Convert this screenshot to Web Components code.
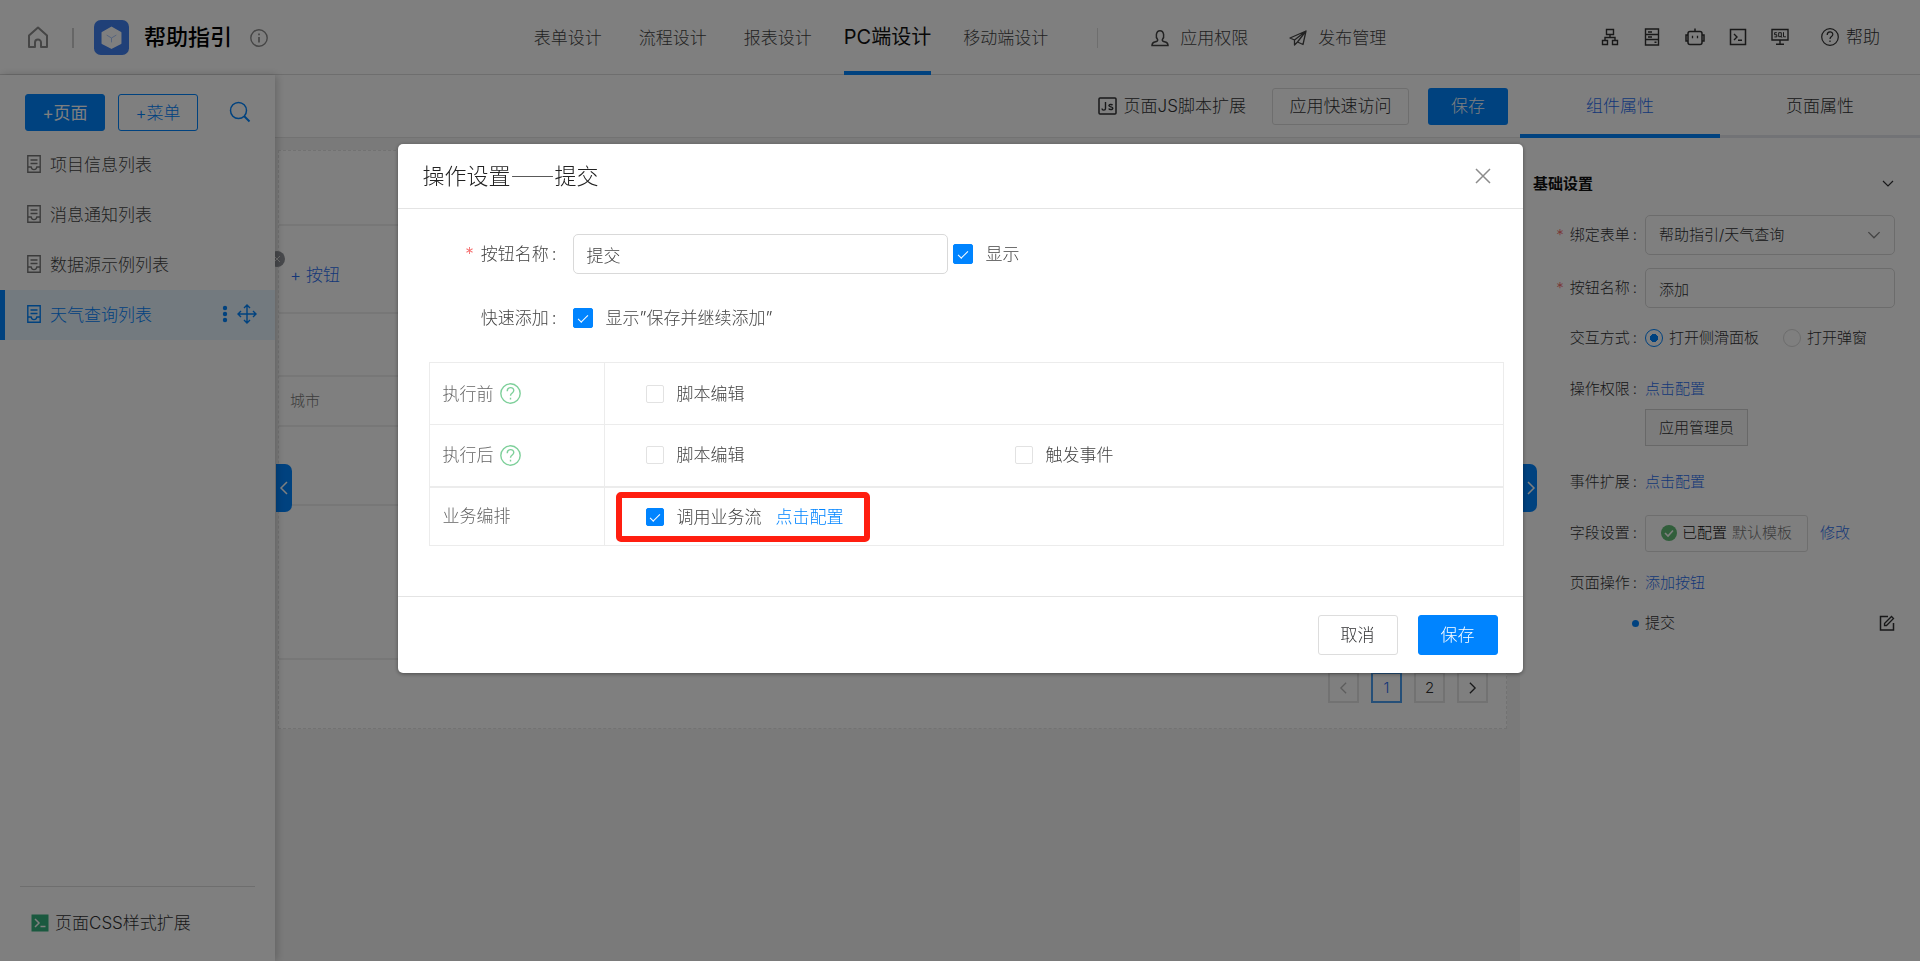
<!DOCTYPE html>
<html lang="zh-CN">
<head>
<meta charset="utf-8">
<title>帮助指引</title>
<style>
  html, body { margin: 0; min-height: 100%; }
  body {
    font-family: Inter, "Noto Sans CJK SC", sans-serif;
    font-weight: 300; font-size: 17px; line-height: 24px; color: #303133;
    --blue: #0084ff; --link: #2b6ff0; --line: #e8e8e8; --bg: #f5f5f5;
  }
</style>
</head>
<body>
<app-shell></app-shell>
<modal-dialog heading="操作设置——提交"><action-form></action-form></modal-dialog>

<script>
const BASE = `
  *, *::before, *::after { box-sizing: border-box; }
  button, input, select { font: inherit; color: inherit; margin: 0; padding: 0; background: none; border: 0; }
  button { cursor: pointer; }
  a { color: var(--link); text-decoration: none; }
`;
function define(name, css, html) {
  customElements.define(name, class extends HTMLElement {
    connectedCallback() {
      if (this.shadowRoot) return;
      const t = document.createElement('template');
      t.innerHTML = `<style>${BASE}${css}</style>${typeof html === 'function' ? html(this) : html}`;
      this.attachShadow({ mode: 'open' }).appendChild(t.content.cloneNode(true));
    }
  });
}

/* Icons: each entry is [viewBox width, viewBox height, markup] */
const ICONS = {
  home: [22, 23, '<path d="M2 9.5 11 1.5l9 8V21h-6v-4.500a3 3 0 0 0-6 0V21H2z" stroke-width="2" stroke-linejoin="round"/>'],
  logo: [36, 36, '<rect width="36" height="36" rx="7" fill="#4080f0" stroke="none"/><path d="M18 7.500 27.500 13v11L18 29 8.500 24V13z" fill="#fff" stroke="#fff" stroke-linejoin="round"/><path d="m13 15.500 5 3 5-3M18 18.500V23" stroke="#a9c6fb" stroke-width="1"/>'],
  info: [18, 18, '<circle cx="9" cy="9" r="8.200" stroke-width="1.400"/><path d="M9 8v5.500M9 4.500v1.800" stroke-width="1.700"/>'],
  user: [18, 18, '<path d="M6.600 10.500C4.500 8.500 4.700 1.700 9 1.700s4.500 6.800 2.400 8.800c-.500 1.500.600 1.800 3 2.500 1.700.5 2.600 1.500 2.600 3.500H1c0-2 .900-3 2.600-3.500 2.400-.7 3.500-1 3-2.500z" stroke-width="1.500"/>'],
  plane: [18, 18, '<path d="M17 2 1 9l4.500 2V16l3-3 5.500 2.500zM5.500 11 17 2 8.500 13" stroke-width="1.300" stroke-linejoin="round"/>'],
  tree: [18, 18, '<path d="M5.500 1.500h7v5h-7zM1.500 12.500h5v4h-5zM11.500 12.500h5v4h-5zM9 6.500v3M4 12.500v-3h10v3" stroke-width="1.400"/>'],
  server: [18, 18, '<path d="M2.500 1h13v16h-13zM2.500 6.500h13M2.500 11.500h13M5 4h4M5 9h4M11.500 14.300h2" stroke-width="1.400"/>'],
  robot: [20, 18, '<rect x="3" y="3.500" width="14" height="13" rx="2"/><path d="M10 .5v3M3 7H1v6h2M17 7h2v6h-2" /><path d="M7.500 7.800v2.400M12.500 7.800v2.400" stroke-width="1.300"/>'],
  term: [18, 18, '<path d="M1.500 1.500h15v15h-15z"/><path d="m5 6 3 3-3 3M9 12.300h4" stroke-width="1.400"/>'],
  sql: [18, 18, '<path d="M1 1.500h16v10.500H1zM9 12v4M5 16.200h8" stroke-width="1.400"/><path d="M5.800 4.700H3.600v2h2.200v2.200H3.400M7.700 4.700h2.600v4H7.700zM9.500 8l1.500 1.700M12.500 4.200v4.600h2.400" stroke-width="1"/>'],
  help: [18, 18, '<circle cx="9" cy="9" r="8.300" stroke-width="1.200"/><path d="M6.200 7c0-4 5.600-4 5.600-.5 0 2.200-2.800 2-2.800 4.500M9 12.600v1.500" stroke-width="1.200"/>'],
  search: [22, 22, '<circle cx="9.500" cy="9.500" r="8"/><path d="m15 15 5.500 5.500" stroke-width="2"/>'],
  doc: [14, 18, '<path d="M.8.8h12.400v16.400H.8zM3.500 5h7M3.500 8.500h7M.8 12h3.400c.6 3.500 5 3.500 5.600 0h3.400" stroke-width="1.400"/>'],
  dots: [6, 18, '<g fill="currentColor" stroke="none"><circle cx="3" cy="3" r="2.200"/><circle cx="3" cy="9" r="2.200"/><circle cx="3" cy="15" r="2.200"/></g>'],
  move: [20, 20, '<path d="M10 1v18M1 10h18M7 4l3-3 3 3M7 16l3 3 3-3M4 7l-3 3 3 3M16 7l3 3-3 3" stroke-width="1.400"/>'],
  js: [19, 18, '<rect x="1" y="1" width="17" height="16" rx="1"/><path d="M7.500 5v6.500c0 2.200-3.500 2.200-3.500 0M14.500 8.300c-.6-1.300-4-1-3.500.6.400 1.300 3.600.6 3.800 2.100.2 2-3.500 2-4 .5" stroke-width="1.400"/>'],
  css: [18, 18, '<rect x=".5" y=".5" width="17" height="17" fill="#35b37e" stroke="none"/><path d="m4 5 4 4-4 4M9.500 12.500h5" stroke="#fff" stroke-width="1.500"/>'],
  left: [10, 16, '<path d="M8 2 2 8l6 6"/>'],
  right: [10, 16, '<path d="m2 2 6 6-6 6"/>'],
  down: [12, 8, '<path d="m1 1 5 5 5-5" stroke-width="1.200"/>'],
  close: [16, 16, '<path d="m1 1 14 14M15 1 1 15"/>'],
  badge: [16, 16, '<circle cx="8" cy="8" r="8" fill="#909399" stroke="none"/><path d="m5 5 6 6M11 5l-6 6" stroke="#ddd" stroke-width="1"/>'],
  ok: [16, 16, '<circle cx="8" cy="8" r="8" fill="#62bd76" stroke="none"/><path d="m4 8 3 3 5-5.500" stroke="#fff" stroke-width="1.600"/>'],
  edit: [16, 16, '<path d="M9 1.500H1.500v13.500h13V8" /><path d="m5.500 8.500 7-7 2 2-7 7H5.500z" stroke-width="1.300"/>'],
};
define('ui-icon', ':host{display:inline-flex;flex:none} svg{display:block}', el => {
  const [w, h, body] = ICONS[el.getAttribute('name')];
  const size = Number(el.getAttribute('height')) || h;
  return `<svg aria-hidden="true" width="${Math.round(w * size / h)}" height="${size}" viewBox="0 0 ${w} ${h}" fill="none" stroke="currentColor" stroke-width="1.500">${body}</svg>`;
});

define('app-header', `
  :host { display: grid; grid-template-columns: 1fr auto 1fr; height: 75px; background: #fff; border-bottom: 1px solid #dcdcdc; }
  .brand { display: flex; align-items: center; padding: 0 0 1px 27px; color: #8c8c8c; }
  .bar { width: 2px; height: 20px; background: #ccc; }
  .brand .bar { margin: 0 20px 0 23px; }
  h1 { margin: 0 18px 2px 15px; font-size: 22px; font-weight: 500; color: #000; line-height: 32px; }
  nav, .tools { display: flex; align-items: center; white-space: nowrap; }
  nav { height: 76px; gap: 37px; }
  nav a { color: #444; display: flex; align-items: center; gap: 11px; }
  nav a[aria-current] { font-size: 20px; font-weight: 400; color: #111; align-self: stretch; border-bottom: 5px solid var(--blue); padding-top: 3px; margin: 0 -5px; }
  nav .bar { width: 1px; background: #ddd; margin: 0 16px 0 12px; }
  nav .more { margin-right: 4px; }
  .tools { justify-content: flex-end; gap: 24px; padding: 0 40px 2px 0; color: #333; }
  .tools button { display: flex; align-items: center; gap: 7px; }
  .tools .help { margin-left: 8px; }
`, `
  <div class="brand"><ui-icon name="home"></ui-icon><span class="bar"></span><ui-icon name="logo" height="35"></ui-icon><h1>帮助指引</h1><ui-icon name="info"></ui-icon></div>
  <nav>
    <a href="#form">表单设计</a><a href="#flow">流程设计</a><a href="#report">报表设计</a>
    <a href="#pc" aria-current="page">PC端设计</a><a href="#mobile">移动端设计</a>
    <span class="bar"></span>
    <a class="more" href="#auth"><ui-icon name="user"></ui-icon>应用权限</a><a href="#publish"><ui-icon name="plane"></ui-icon>发布管理</a>
  </nav>
  <div class="tools">
    <button aria-label="组织"><ui-icon name="tree"></ui-icon></button><button aria-label="数据"><ui-icon name="server"></ui-icon></button>
    <button aria-label="机器人"><ui-icon name="robot"></ui-icon></button><button aria-label="终端"><ui-icon name="term"></ui-icon></button>
    <button aria-label="数据库"><ui-icon name="sql"></ui-icon></button><button class="help"><ui-icon name="help"></ui-icon>帮助</button>
  </div>`);

define('side-item', `
  :host { display: block; }
  a { display: flex; align-items: center; height: 50px; padding: 0 18px 0 22px; border-left: 5px solid transparent; color: #444; gap: 9px; }
  ui-icon { color: #777; margin-bottom: 2px; }
  span { flex: 1; }
  :host([active]) a { background: #e6f4ff; border-color: var(--blue); }
  :host([active]) a, :host([active]) ui-icon { color: var(--blue); }
`, el => `<a href="#page"><ui-icon name="doc"></ui-icon><span><slot></slot></span>${el.hasAttribute('active') ? '<ui-icon name="dots"></ui-icon><ui-icon name="move"></ui-icon>' : ''}</a>`);

define('side-bar', `
  :host { display: flex; flex-direction: column; background: #fff; box-shadow: 2px 0 8px rgba(0,0,0,.2); z-index: 1; }
  .top { display: flex; align-items: center; gap: 13px; padding: 19px 25px 9px; color: var(--blue); }
  .top button { width: 80px; height: 37px; border: 1px solid var(--blue); border-radius: 3px; }
  .top .main { background: var(--blue); color: #fff; font-weight: 400; }
  .top .find { display: grid; width: auto; height: auto; border: 0; margin: 0 -1px 2px auto; }
  footer { margin: auto 20px 0; border-top: 1px solid #dcdcdc; height: 75px; display: flex; align-items: center; gap: 6px; padding: 0 0 2px 11px; }
`, `
  <div class="top"><button class="main">+页面</button><button>+菜单</button><button class="find" aria-label="搜索"><ui-icon name="search"></ui-icon></button></div>
  <side-item>项目信息列表</side-item><side-item>消息通知列表</side-item><side-item>数据源示例列表</side-item><side-item active>天气查询列表</side-item>
  <footer><ui-icon name="css"></ui-icon>页面CSS样式扩展</footer>`);

define('design-canvas', `
  :host { display: flex; flex-direction: column; background: var(--bg); position: relative; }
  .bar { display: flex; align-items: center; justify-content: flex-end; gap: 19px; height: 63px; padding-right: 12px; background: #fff; border-bottom: 1px solid #e4e4e4; }
  .bar button { height: 37px; border-radius: 3px; }
  .js { display: flex; align-items: center; gap: 7px; margin-right: 7px; }
  .quick { width: 137px; border: 1px solid #ddd; }
  .save { width: 80px; background: var(--blue); color: #fff; }
  .board { margin: 12px 13px 0 3px; background: #fff; border: 1px dashed #e4e4e4; display: grid; grid-template-rows: 75px 88px 63px 50px 79px 154px 68px; }
  .board > div { border-bottom: 2px solid #efefef; display: flex; align-items: center; padding-left: 11px; }
  .board > .pager { border: 0; gap: 12px; padding-right: 18px; justify-content: flex-end; align-items: flex-start; }
  .board a { padding-top: 12px; }
  .head { font-size: 15px; color: #777; }
  .pager button { width: 31px; height: 31px; margin-top: 12px; border: 2px solid #e4e4e4; font-size: 15px; display: grid; place-items: center; }
  .pager [aria-current] { border-color: #4a9ff0; color: var(--link); }
  .pager [disabled] { color: #bbb; }
  .tab { position: absolute; top: 389px; left: 1px; width: 16px; height: 48px; border-radius: 0 7px 7px 0; background: var(--blue); color: #fff; display: grid; place-items: center; }
  .badge { position: absolute; top: 176px; left: -6px; }
`, `
  <div class="bar"><button class="js"><ui-icon name="js"></ui-icon>页面JS脚本扩展</button><button class="quick">应用快速访问</button><button class="save">保存</button></div>
  <div class="board">
    <div></div><div><a href="#add">+ 按钮</a></div><div></div><div class="head">城市</div><div></div><div></div>
    <div class="pager"><button disabled aria-label="上一页"><ui-icon name="left" height="14"></ui-icon></button><button aria-current="page">1</button><button>2</button><button aria-label="下一页"><ui-icon name="right" height="14"></ui-icon></button></div>
  </div>
  <button class="tab" aria-label="收起"><ui-icon name="left"></ui-icon></button>
  <ui-icon class="badge" name="badge"></ui-icon>`);

define('prop-panel', `
  :host { display: block; background: #fff; position: relative; font-size: 15px; }
  .tabs { display: grid; grid-template-columns: 1fr 1fr; height: 63px; font-size: 17px; }
  .tabs a { display: grid; place-items: center; padding-top: 2px; border-bottom: 3px solid #e4e7ed; color: inherit; }
  .tabs [aria-current] { border-bottom: 4px solid var(--blue); color: var(--link); }
  .title { display: flex; justify-content: space-between; align-items: center; padding: 34px 26px 0 13px; }
  h2 { margin: 0; font-size: 15px; font-weight: 700; color: #111; }
  .grid { display: grid; grid-template-columns: 117px 1fr; column-gap: 8px; padding: 19px 25px 0 0; }
  .grid > * { min-height: 40px; display: flex; align-items: center; }
  .grid > .label { justify-content: flex-end; }
  .label::after { content: ":"; margin-left: 3px; }
  .req::before { content: "*"; color: #f56c6c; margin-right: 6px; }
  .box { border: 1px solid #d9d9d9; border-radius: 5px; height: 40px; padding: 0 13px; width: 100%; }
  .select { position: relative; }
  .select select { appearance: none; }
  .select ui-icon { position: absolute; right: 14px; color: #888; }
  .s13 { margin-bottom: 13px; } .s11 { margin-bottom: 11px; } .s10 { margin-bottom: 10px; }
  .grid > .top { align-items: flex-start; }
  .radio { display: flex; align-items: center; gap: 6px; margin-right: 24px; white-space: nowrap; }
  .radio input { appearance: none; width: 18px; height: 18px; border-radius: 50%; border: 1px solid #d9d9d9; }
  .radio input:checked { border: 1px solid var(--blue); background: radial-gradient(var(--blue) 4px, transparent 4px); }
  .tag { height: 37px; width: 103px; border: 1px solid #d0d0d0; background: #f8f8f8; }
  .conf { height: 37px; width: 163px; border: 1px solid #ddd; border-radius: 3px; display: flex; align-items: center; justify-content: center; gap: 5px; margin-right: 12px; color: #777; white-space: nowrap; }
  .conf b { font-weight: 300; color: #111; }
  .sub { justify-content: space-between; }
  .sub button { display: grid; }
  .dot { justify-content: flex-end; }
  .dot::after { content: ""; width: 7px; height: 7px; margin-right: -2px; border-radius: 50%; background: var(--blue); }
  .tab { position: absolute; top: 389px; left: 1px; width: 16px; height: 48px; border-radius: 0 7px 7px 0; background: var(--blue); color: #fff; display: grid; place-items: center; padding-left: 3px; }
`, `
  <div class="tabs"><a href="#c" aria-current="true">组件属性</a><a href="#p">页面属性</a></div>
  <div class="title"><h2>基础设置</h2><ui-icon name="down"></ui-icon></div>
  <div class="grid">
    <label class="label req s13" for="bind">绑定表单</label><div class="select s13"><select class="box" id="bind"><option>帮助指引/天气查询</option></select><ui-icon name="down" height="9"></ui-icon></div>
    <label class="label req s10" for="name">按钮名称</label><div class="s10"><input class="box" id="name" value="添加"></div>
    <span class="label s11">交互方式</span><div class="s11"><label class="radio"><input type="radio" name="m" checked>打开侧滑面板</label><label class="radio"><input type="radio" name="m">打开弹窗</label></div>
    <span class="label">操作权限</span><div><a href="#1">点击配置</a></div>
    <span></span><div class="top s13"><button class="tag">应用管理员</button></div>
    <span class="label s11">事件扩展</span><div class="s11"><a href="#2">点击配置</a></div>
    <span class="label s10">字段设置</span><div class="s10"><button class="conf"><ui-icon name="ok"></ui-icon><b>已配置</b>默认模板</button><a href="#3">修改</a></div>
    <span class="label">页面操作</span><div><a href="#4">添加按钮</a></div>
    <span class="dot"></span><div class="sub">提交<button aria-label="编辑"><ui-icon name="edit"></ui-icon></button></div>
  </div>
  <button class="tab" aria-label="收起"><ui-icon name="right"></ui-icon></button>`);

define('app-shell', `
  :host { display: flex; flex-direction: column; min-height: 100vh; }
  main { flex: 1; display: grid; grid-template-columns: 275px 1fr 400px; }
`, `<app-header></app-header><main><side-bar></side-bar><design-canvas></design-canvas><prop-panel></prop-panel></main>`);

define('check-box', `
  :host { display: inline-flex; }
  label { display: flex; align-items: center; gap: 13px; }
  input { appearance: none; width: 18px; height: 18px; border: 1px solid #e2e2e2; border-radius: 2px; display: grid; place-items: center; }
  :host([large]) input { width: 20px; height: 20px; }
  input:checked { background: var(--blue); border-color: var(--blue); }
  input:checked::after { content: ""; width: 10px; height: 5px; border: solid #fff; border-width: 0 0 1px 1px; transform: translateY(-1px) rotate(-45deg); }
`, el => `<label><input type="checkbox" ${el.hasAttribute('checked') ? 'checked' : ''}><slot></slot></label>`);

define('action-form', `
  :host { display: block; padding: 25px 19px 50px 31px; color: #444; }
  .row { display: grid; grid-template-columns: 128px 375px auto; column-gap: 16px; align-items: center; min-height: 40px; }
  .row + .row { margin-top: 24px; }
  .label { justify-self: end; }
  .label::after { content: ":"; margin-left: 3px; }
  .req::before { content: "*"; color: #f56c6c; margin-right: 7px; }
  .row input { height: 40px; width: 100%; border: 1px solid #d9d9d9; border-radius: 5px; padding: 0 13px; }
  .row input + check-box { margin-left: -11px; }
  table { width: 100%; margin-top: 24px; border-collapse: collapse; }
  th, td { border: 1px solid #ececec; height: 62px; padding: 0; font-weight: 300; text-align: left; }
  th { width: 175px; padding-left: 13px; color: #666; }
  tr:last-child > * { height: 59px; border-top: 2px solid #ececec; }
  .name { display: flex; align-items: center; gap: 6px; }
  .name ui-icon { color: #7fd09b; }
  .cells { display: grid; grid-template-columns: 369px 1fr; padding-left: 41px; }
  .mark { display: flex; align-items: center; gap: 14px; width: 254px; height: 50px; margin: 2px 0 0 11px; padding: 0 0 0 24px; border: 6px solid #ff1e10; border-radius: 5px; }
  .mark a { color: var(--blue); }
`, `
  <div class="row"><label class="label req" for="n">按钮名称</label><input id="n" value="提交"><check-box large checked>显示</check-box></div>
  <div class="row"><span class="label">快速添加</span><check-box large checked>显示”保存并继续添加”</check-box></div>
  <table>
    <tr><th><span class="name">执行前<ui-icon name="help" height="21"></ui-icon></span></th><td><div class="cells"><check-box>脚本编辑</check-box></div></td></tr>
    <tr><th><span class="name">执行后<ui-icon name="help" height="21"></ui-icon></span></th><td><div class="cells"><check-box>脚本编辑</check-box><check-box>触发事件</check-box></div></td></tr>
    <tr><th>业务编排</th><td><div class="mark"><check-box checked>调用业务流</check-box><a href="#flow">点击配置</a></div></td></tr>
  </table>`);

define('modal-dialog', `
  :host { position: fixed; inset: 0; z-index: 10; background: rgba(0,0,0,.5); display: flex; justify-content: center; align-items: flex-start; padding-top: 15vh; }
  section { width: 1125px; max-width: 100%; background: #fff; border-radius: 5px; box-shadow: 0 1px 4px rgba(0,0,0,.4); }
  header { display: flex; align-items: center; justify-content: space-between; height: 65px; padding: 0 32px 0 25px; border-bottom: 1px solid #e4e4e4; }
  h2 { margin: 0 0 4px; font: 300 22px/32px "Noto Sans CJK SC", sans-serif; color: #222; }
  header button { color: #8c8c8c; display: grid; }
  footer { display: flex; justify-content: flex-end; gap: 20px; padding: 18px 25px; border-top: 1px solid #e4e4e4; }
  footer button { width: 80px; height: 40px; border: 1px solid #ddd; border-radius: 3px; }
  footer .ok { background: var(--blue); border-color: var(--blue); color: #fff; }
`, el => `
  <section role="dialog" aria-modal="true">
    <header><h2>${el.getAttribute('heading')}</h2><button aria-label="关闭"><ui-icon name="close"></ui-icon></button></header>
    <slot></slot>
    <footer><button>取消</button><button class="ok">保存</button></footer>
  </section>`);
</script>
</body>
</html>
